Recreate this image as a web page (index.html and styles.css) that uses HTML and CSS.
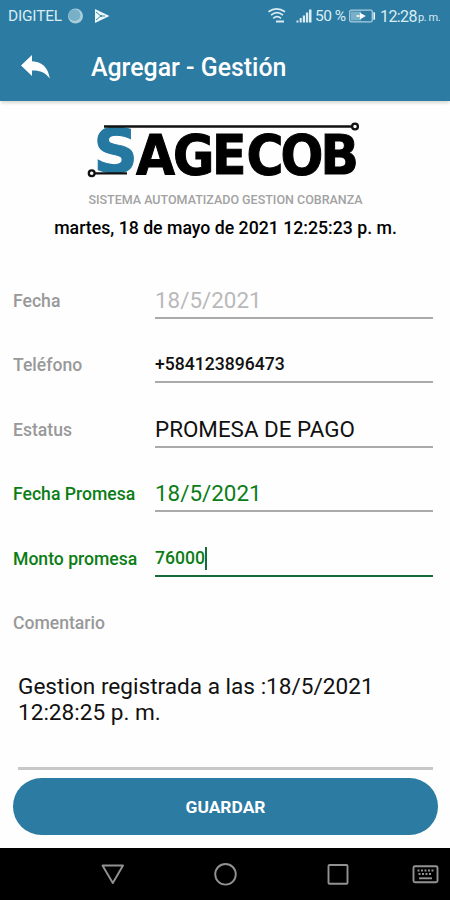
FILE: index.html
```html
<!DOCTYPE html>
<html lang="es">
<head>
<meta charset="utf-8">
<title>Agregar - Gestión</title>
<link rel="stylesheet" href="styles.css">
</head>
<body>
<div class="status">
  <span class="carrier">DIGITEL</span>
  <svg class="left-icons" width="44" height="18" viewBox="0 0 44 18">
    <circle cx="8.500" cy="9" r="7.500" fill="#a9cedb"/><circle cx="7.500" cy="8.200" r="5.900" fill="#78b0c7"/>
    <path d="M28 2v14l14.500-7z" fill="#eef7fa"/>
    <path d="M29 5l6 5M29 13l6-5M33 9h5" stroke="#2c7ba2" stroke-width=".9" fill="none"/>
  </svg>
  <span class="grow"></span>
  <svg class="right-icons" width="45" height="18" viewBox="0 0 45 18">
    <g fill="none" stroke="#d9edf4" stroke-width="1.700">
      <path d="M.5 4.800Q8.500-1 17 4.800M3 8.200Q9 3.200 15 8.200M5.300 11.300Q9 8 13 11.300"/>
      <path d="M8 14.500h8" stroke-width="2"/>
    </g>
    <g fill="#d9edf4"><path d="M28.500 13.500h2v2h-2zM31.700 11h2v4.500h-2zM34.800 8.500h2.200v7h-2.200zM37.900 5.500h2.300v10h-2.300zM41 2.500h2.500v13H41z"/></g>
  </svg>
  <span class="percent">50 %</span>
  <svg class="battery" width="27" height="14" viewBox="0 0 27 14">
    <rect x=".7" y="1.200" width="22.600" height="11.600" rx="1.500" fill="none" stroke="#a9cfdf" stroke-width="1.300"/>
    <path d="M2 2.500h10v9H2z" fill="#79afc8"/><path d="M25.200 3.300v7.400" stroke="#e5f3f8" stroke-width="1.700"/>
    <path d="M7.500 7h3M11.500 4.700L15.500 7l-4 2.300z" stroke="#fff" stroke-width="1.300" fill="#fff"/>
  </svg>
  <span class="clock">12:28</span><span class="pm">p. m.</span>
</div>
<header class="bar">
  <svg class="back" width="31" height="26" viewBox="0 0 31 26">
    <path d="M1 11.500L12 1v6.200C22 7.700 28 13 29.800 24.500 25 18 20 16.200 12 16.400V22z" fill="#fff"/>
  </svg>
  <h1>Agregar - Gestión</h1>
</header>
<main>
  <svg class="logo" width="280" height="62" viewBox="86 120 280 62">
    <text class="logo-s" transform="translate(93.500 171.800) scale(1.140 1)">S</text>
    <text class="logo-rest" x="136 173 212 246.500 280.500 320.500" y="174">AGECOB</text>
    <g fill="none" stroke="#111" stroke-width="2.300">
      <path d="M104 126.500H351.500M95 173.300H127"/>
      <circle cx="355" cy="126.500" r="2.900"/><circle cx="91.700" cy="173.300" r="2.900"/>
    </g>
  </svg>
  <p class="tagline">SISTEMA AUTOMATIZADO GESTION COBRANZA</p>
  <p class="date">martes, 18 de mayo de 2021 12:25:23 p. m.</p>
  <div class="form">
    <div class="row"><label>Fecha</label><div class="field large muted">18/5/2021</div></div>
    <div class="row"><label>Teléfono</label><div class="field phone">+584123896473</div></div>
    <div class="row"><label>Estatus</label><div class="field large">PROMESA DE PAGO</div></div>
    <div class="row green"><label>Fecha Promesa</label><div class="field large">18/5/2021</div></div>
    <div class="row green"><label>Monto promesa</label><div class="field focus">76000<span class="caret"></span></div></div>
    <div class="row last"><label>Comentario</label></div>
  </div>
  <div class="comment">Gestion registrada a las :18/5/2021<br>12:28:25 p. m.</div>
  <button class="save">GUARDAR</button>
</main>
<nav>
  <svg width="450" height="52" viewBox="0 0 450 52" fill="none" stroke="#929292" stroke-width="1.900">
    <path d="M102.500 17.500h20.500L112.800 35z" stroke-linejoin="round"/>
    <circle cx="225.500" cy="26.300" r="10.300"/>
    <rect x="328.500" y="17" width="19" height="18.800" rx="1"/>
    <rect x="413.500" y="18.300" width="24" height="16" rx="1.500"/>
    <path d="M417.500 22.500h16M418.500 26h14" stroke-dasharray="2 1.500"/><path d="M419 30.300h13"/>
  </svg>
</nav>
</body>
</html>
```
FILE: styles.css
```css
* { box-sizing: border-box; }
body {
  margin: 0;
  width: 450px;
  height: 900px;
  display: flex;
  flex-direction: column;
  overflow: hidden;
  background: #fefefe;
  font-family: Roboto, sans-serif;
  color: #111;
}
h1, p { margin: 0; }
.status {
  height: 32px;
  flex: none;
  display: flex;
  align-items: center;
  padding: 0 10px 0 8px;
  background: #2c7ba2;
  color: #d9edf4;
  font-size: 15.5px;
  white-space: nowrap;
}
.carrier { width: 59px; letter-spacing: -.2px; }
.grow { flex: 1; }
.right-icons { margin-right: 2px; }
.percent { width: 34px; letter-spacing: -.5px; }
.battery { margin-right: 4px; }
.clock { width: 38px; font-size: 16px; letter-spacing: -.6px; }
.pm { width: 22px; font-size: 11px; padding-top: 3px; letter-spacing: -.4px; }
.bar {
  height: 68.5px;
  flex: none;
  display: flex;
  align-items: center;
  padding: 2px 20px 0;
  background: #2c7ba2;
  color: #fff;
  box-shadow: 0 3px 3px -1px #d5d9d1;
}
.back { margin-right: 40px; }
h1 { font-size: 24.9px; font-weight: 500; }
main {
  height: 747.5px;
  display: flex;
  flex-direction: column;
  align-items: center;
  padding: 19.5px 12px 0 13px;
}
.logo { flex: none; overflow: visible; }
.logo-s, .logo-rest { font-family: "DejaVu Sans Condensed", "DejaVu Sans", sans-serif; font-stretch: condensed; font-weight: 700; }
.logo-s { font-size: 60px; fill: #2578a0; stroke: #2578a0; stroke-width: 1px; }
.logo-rest { font-size: 56px; fill: #000; stroke: #000; stroke-width: 1px; }
.tagline { height: 32px; padding-top: 4px; font-size: 12.5px; font-weight: 500; line-height: 28px; color: #a2a2a2; white-space: nowrap; }
.date { font-size: 17.7px; font-weight: 500; line-height: 29px; height: 56px; white-space: nowrap; color: #000; }
.form { align-self: stretch; flex: none; }
.row {
  height: 64.4px;
  display: grid;
  grid-template-columns: 142px 278px;
  align-items: start;
}
label { line-height: 62px; font-size: 17.6px; font-weight: 500; color: #999; }
.field {
  height: 49px;
  line-height: 61px;
  font-size: 17.6px;
  font-weight: 500;
  border-bottom: 2px solid #aaa;
  white-space: nowrap;
}
.large { font-size: 22.4px; font-weight: 400; }
.muted { color: #b9b9b9; }
.green label, .green .field { color: #0b7d16; }
.green .focus { height: 49.5px; line-height: 60px; border-bottom: 2.5px solid #176b3a; }
.caret { display: inline-block; width: 2px; height: 23px; background: #176b3a; vertical-align: -6px; }
.comment {
  flex: none;
  align-self: flex-start;
  width: 415px;
  height: 113.5px;
  margin-left: 5px;
  padding-top: 17.5px;
  font-size: 22.6px;
  line-height: 26.5px;
  border-bottom: 3px solid #c8c8c8;
}
.save {
  flex: none;
  width: 425px;
  height: 57px;
  margin-top: 8px;
  padding: 2px 0 0;
  border: 0;
  border-radius: 29px;
  background: #2c7ba2;
  color: #fff;
  font: 700 17.4px Roboto, sans-serif;
}
nav { height: 52px; flex: none; background: #000; }
nav svg { display: block; }
```
